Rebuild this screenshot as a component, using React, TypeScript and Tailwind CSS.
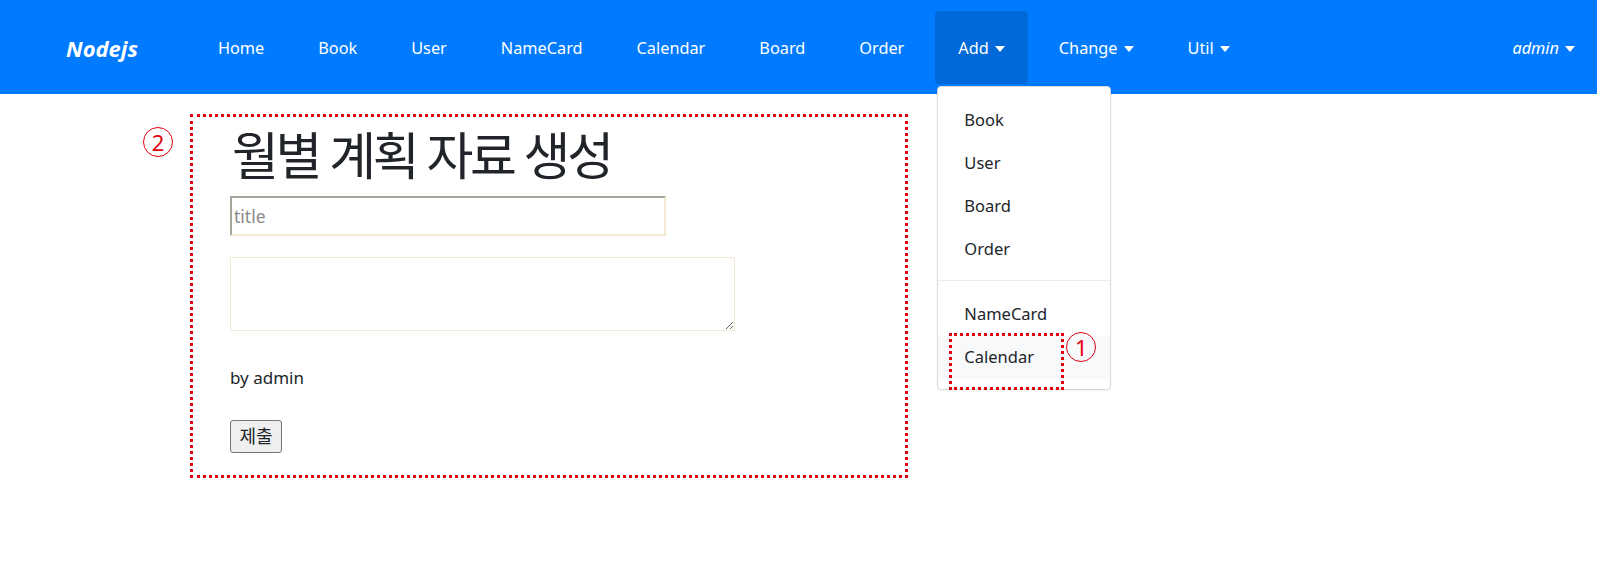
import React from 'react'

const NAV = ['Home', 'Book', 'User', 'NameCard', 'Calendar', 'Board', 'Order']
const FONT = "font-['Noto_Sans','Noto_Sans_CJK_KR',sans-serif]"

function Caret() {
  return (
    <span className="ml-[6px] inline-block align-[3px] border-t-[6px] border-x-[5px] border-x-transparent border-t-white" />
  )
}

function Circled({ n }: { n: string }) {
  return (
    <span className="flex h-[30px] w-[30px] items-center justify-center rounded-full border-[1.5px] border-[#e3000f] text-[22px] leading-none text-[#e3000f]">
      {n}
    </span>
  )
}

function AddMenu() {
  const top = ['Book', 'User', 'Board', 'Order']
  return (
    <div className="absolute left-[2px] top-[75px] z-10 w-[174px] rounded-[4px] border border-[#d9d9d9] bg-white pb-[10px] pt-[12px] shadow-[0_1px_2px_rgba(0,0,0,0.06)]">
      {top.map((t) => (
        <div key={t} className="flex h-[43px] items-center pl-[26px] text-[16.5px] text-[#212529]">
          {t}
        </div>
      ))}
      <div className="mb-[12px] mt-[9px] border-t border-[#e9ecef]" />
      <div className="flex h-[43px] items-center pl-[26px] text-[16.5px] text-[#212529]">NameCard</div>
      <div className="relative flex h-[43px] items-center bg-[#f8f9fa] pl-[26px] text-[16.5px] text-[#212529]">
        Calendar
        {/* annotation ① */}
        <div className="absolute left-[11px] top-[-3px] h-[57px] w-[115px] border-[3px] border-dotted border-[#e3000f]" />
        <div className="absolute left-[128px] top-[-4px]">
          <Circled n="1" />
        </div>
      </div>
    </div>
  )
}

export default function App() {
  return (
    <div className={`${FONT} min-h-[577px] bg-white`}>
      {/* Navbar */}
      <nav className="flex h-[94px] items-center bg-[#007bff] pl-[66px] pr-0">
        <span className="mr-[57px] pt-[2px] text-[22px] font-bold italic text-white">Nodejs</span>
        <ul className="flex items-center gap-[8px]">
          {NAV.map((n) => (
            <li key={n} className="flex h-[73px] items-center px-[23px] pt-[3px] text-[16.3px] text-white">
              {n}
            </li>
          ))}
          <li className="relative flex h-[73px] items-center rounded-[4px] bg-[#0069d9] px-[23px] pt-[3px] text-[16.3px] text-white">
            Add
            <Caret />
            <AddMenu />
          </li>
          <li className="flex h-[73px] items-center px-[23px] pt-[3px] text-[16.3px] text-white">
            Change
            <Caret />
          </li>
          <li className="flex h-[73px] items-center px-[23px] pt-[3px] text-[16.3px] text-white">
            Util
            <Caret />
          </li>
        </ul>
        <div className="ml-auto flex h-[73px] items-center px-[22px] pt-[3px] text-[16.3px] italic text-white">
          admin
          <Caret />
        </div>
      </nav>

      {/* Form, annotated ② */}
      <div className="relative ml-[190px] mt-[20px] h-[364px] w-[718px] border-[3px] border-dotted border-[#e3000f] pl-[37px] pt-[9px]">
        <div className="absolute left-[-50px] top-[10px]">
          <Circled n="2" />
        </div>
        <h1 className="h-[58px] pl-[2px] text-[51px] leading-[58px] tracking-[-3.3px] text-[#212529]">월별 계획 자료 생성</h1>
        <input
          placeholder="title"
          className="mt-[12px] block h-[40px] w-[436px] border-2 border-b-[#f3e8d6] border-l-[#a9a49a] border-r-[#f3e8d6] border-t-[#a9a49a] px-[2px] text-[17.5px] outline-none placeholder:text-[#8a8a8a]"
        />
        <textarea className="mt-[21px] block h-[74px] w-[505px] border border-[#f3ead9] outline-none" />
        <p className="mt-[35px] h-[24px] text-[17px] leading-[24px] text-[#212529]">by admin</p>
        <button className="mt-[30px] h-[33px] w-[52px] rounded-[3px] border border-[#767676] bg-[#efefef] text-[18px] text-[#212529]">
          제출
        </button>
      </div>
    </div>
  )
}
